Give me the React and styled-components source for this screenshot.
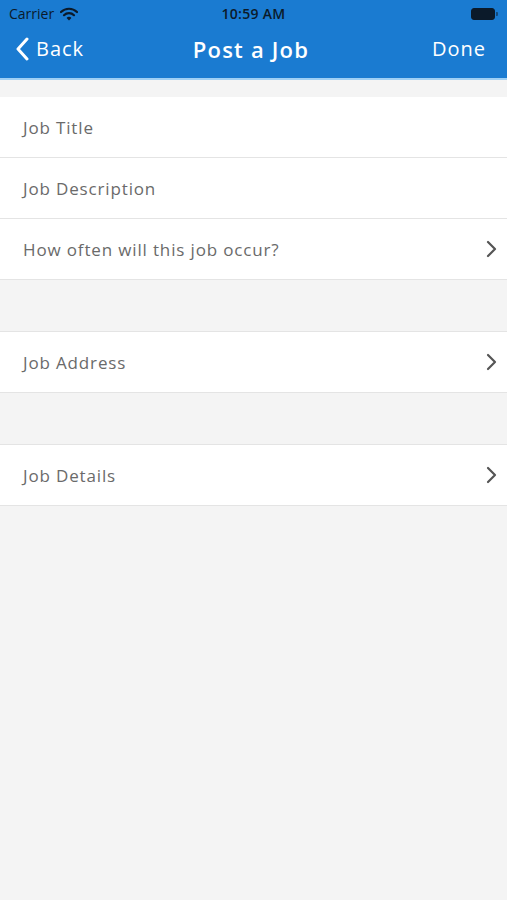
import React from 'react'
import styled, {createGlobalStyle} from 'styled-components'

const GlobalStyle = createGlobalStyle`
  html, body {
    margin: 0;
    padding: 0;
    background: #f4f4f4;
    font-family: "Open Sans", "Liberation Sans", sans-serif;
  }
`

const Screen = styled.div`
  width: 507px;
  min-height: 900px;
  background: #f4f4f4;
`

const Header = styled.div`
  background: #1a7bd1;
  border-bottom: 2px solid #9fd0f5;
`

const StatusBar = styled.div`
  height: 27px;
  display: grid;
  grid-template-columns: 1fr auto 1fr;
  align-items: center;
  padding: 0 9px;
  color: #0b1a2a;
  font-size: 14px;
`

const Carrier = styled.div`
  display: flex;
  align-items: center;
  gap: 6px;
`

const Clock = styled.div`
  font-weight: 600;
  font-size: 14px;
  letter-spacing: 0.3px;
`

const Battery = styled.div`
  justify-self: end;
  display: flex;
  align-items: center;
  gap: 1px;
`

const BatteryBody = styled.div`
  width: 22px;
  height: 10px;
  border-radius: 3px;
  background: #0b1a2a;
  border: 1px solid #0b1a2a;
`

const BatteryCap = styled.div`
  width: 2px;
  height: 4px;
  border-radius: 0 1px 1px 0;
  background: #0b1a2a;
  opacity: 0.5;
`

const NavBar = styled.div`
  height: 51px;
  box-sizing: border-box;
  display: grid;
  grid-template-columns: 1fr auto 1fr;
  align-items: center;
  padding: 0 21px 8px 16px;
  color: #fff;
`

const BackButton = styled.div`
  display: flex;
  align-items: center;
  gap: 6px;
  font-size: 20px;
  letter-spacing: 1px;
`

const Title = styled.div`
  font-size: 22px;
  font-weight: 600;
  letter-spacing: 1.2px;
`

const Done = styled.div`
  justify-self: end;
  font-size: 20px;
  letter-spacing: 1px;
`

const Group = styled.div`
  margin-top: ${p => p.$gap}px;
  background: #fff;
  border-top: ${p => (p.$topLine ? '1px solid #e4e4e4' : 'none')};
  border-bottom: 1px solid #e4e4e4;
`

const Row = styled.div`
  height: 60px;
  display: flex;
  align-items: center;
  justify-content: space-between;
  padding: 0 10px 0 23px;
  color: #6a6a6a;
  font-size: 17px;
  letter-spacing: 0.85px;
  & + & {
    border-top: 1px solid #e4e4e4;
  }
`

const Chevron = () => (
  <svg width="12" height="18" viewBox="0 0 12 18">
    <path d="M3 2l7 7-7 7" fill="none" stroke="#555" strokeWidth="2.2" strokeLinecap="round" strokeLinejoin="round"/>
  </svg>
)

const Wifi = () => (
  <svg width="18" height="14" viewBox="0 0 18 14">
    <path d="M1 5a11.5 11.5 0 0 1 16 0" fill="none" stroke="#0b1a2a" strokeWidth="2.2" strokeLinecap="round"/>
    <path d="M4 8.2a7 7 0 0 1 10 0" fill="none" stroke="#0b1a2a" strokeWidth="2.2" strokeLinecap="round"/>
    <path d="M6.6 11a3 3 0 0 1 4.8 0L9 13.5z" fill="#0b1a2a"/>
  </svg>
)

const BackArrow = () => (
  <svg width="14" height="24" viewBox="0 0 14 24">
    <path d="M11 2L2 12l9 10" fill="none" stroke="#fff" strokeWidth="3" strokeLinecap="round" strokeLinejoin="round"/>
  </svg>
)

function App() {
  return (
    <Screen>
      <GlobalStyle/>
      <Header>
        <StatusBar>
          <Carrier>Carrier <Wifi/></Carrier>
          <Clock>10:59 AM</Clock>
          <Battery><BatteryBody/><BatteryCap/></Battery>
        </StatusBar>
        <NavBar>
          <BackButton><BackArrow/>Back</BackButton>
          <Title>Post a Job</Title>
          <Done>Done</Done>
        </NavBar>
      </Header>
      <Group $gap={17}>
        <Row>Job Title</Row>
        <Row>Job Description</Row>
        <Row>How often will this job occur? <Chevron/></Row>
      </Group>
      <Group $gap={51} $topLine>
        <Row>Job Address <Chevron/></Row>
      </Group>
      <Group $gap={51} $topLine>
        <Row>Job Details <Chevron/></Row>
      </Group>
    </Screen>
  )
}

export default App
